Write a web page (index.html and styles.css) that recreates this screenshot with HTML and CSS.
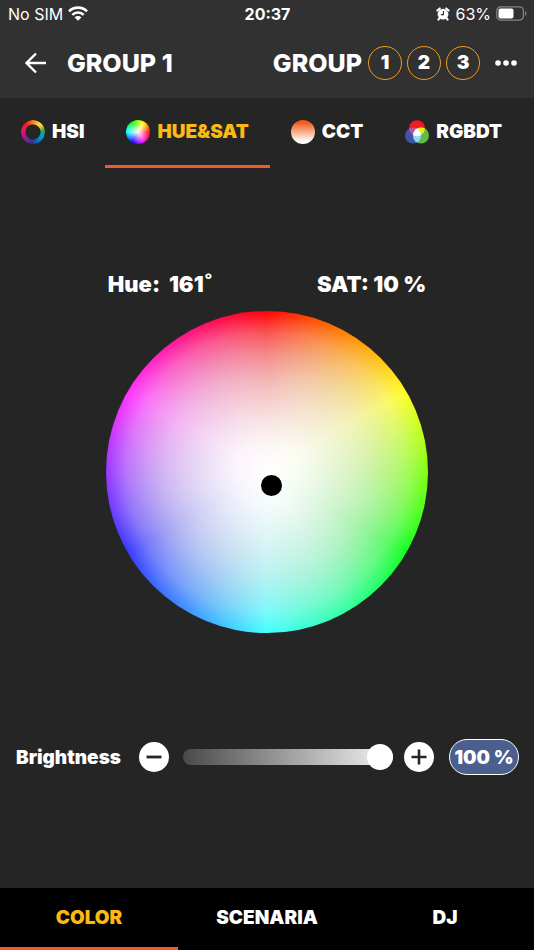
FILE: index.html
```html
<!DOCTYPE html>
<html lang="en">
<head>
<meta charset="utf-8">
<meta name="viewport" content="width=device-width, initial-scale=1">
<title>Group 1</title>
<link rel="stylesheet" href="styles.css">
</head>
<body>
<div class="app">
  <header class="top">
    <div class="status">
      <div class="status-left">
        <span>No SIM</span>
        <svg width="20" height="15" viewBox="0 0 20 15" aria-hidden="true">
          <g fill="none" stroke="#fff" stroke-width="2.6">
            <path d="M1 5.3a12.8 12.8 0 0 1 18 0"/>
            <path d="M4.3 8.8a8.1 8.1 0 0 1 11.4 0"/>
          </g>
          <path d="M10 14.8 6.6 11.4a4.8 4.8 0 0 1 6.8 0z" fill="#fff"/>
        </svg>
      </div>
      <time class="clock">20:37</time>
      <div class="status-right">
        <svg width="14" height="14" viewBox="0 0 14 14" aria-hidden="true">
          <circle cx="7" cy="7.2" r="5.4" fill="#fff"/>
          <path d="M1.4 3.6 3.8 1.4M12.6 3.6 10.2 1.4M3.4 11.2 2.4 12.6M10.6 11.2 11.6 12.6" stroke="#fff" stroke-width="2" stroke-linecap="round"/>
          <path d="M7.4 4v3.6H4.8" fill="none" stroke="#313131" stroke-width="1.1"/>
        </svg>
        <span>63%</span>
        <svg width="31" height="15" viewBox="0 0 31 15" aria-hidden="true">
          <rect x=".8" y=".8" width="26.6" height="13.4" rx="4" fill="none" stroke="#858585" stroke-width="1.2"/>
          <rect x="2.5" y="2.5" width="15" height="10" rx="2" fill="#fff"/>
          <path d="M29 5v5c1.8-.8 1.8-4.2 0-5z" fill="#858585"/>
        </svg>
      </div>
    </div>
    <div class="bar">
      <button class="icon-button" aria-label="Back">
        <svg width="22" height="22" viewBox="0 0 22 22" aria-hidden="true">
          <path d="M21 11H2M11 1.5 1.5 11l9.5 9.5" fill="none" stroke="#fff" stroke-width="2.4"/>
        </svg>
      </button>
      <h1 class="title">GROUP 1</h1>
      <span class="title group-label">GROUP</span>
      <div class="groups">
        <button class="group">1</button>
        <button class="group">2</button>
        <button class="group">3</button>
      </div>
      <button class="icon-button" aria-label="More">
        <svg width="22" height="6" viewBox="0 0 22 6" aria-hidden="true">
          <g fill="#fff"><circle cx="3" cy="3" r="2.8"/><circle cx="11" cy="3" r="2.8"/><circle cx="19" cy="3" r="2.8"/></g>
        </svg>
      </button>
    </div>
  </header>

  <nav class="tabs" aria-label="Color mode">
    <button class="tab"><span class="swatch ring"></span>HSI</button>
    <button class="tab tab-active"><span class="swatch hues"></span>HUE&amp;SAT</button>
    <button class="tab"><span class="swatch warm"></span>CCT</button>
    <button class="tab">
      <svg width="24" height="24" viewBox="0 0 24 24" aria-hidden="true">
        <defs>
          <clipPath id="red"><circle cx="12" cy="8.2" r="8"/></clipPath>
          <clipPath id="blue"><circle cx="8" cy="15.5" r="8"/></clipPath>
        </defs>
        <circle cx="12" cy="8.2" r="8" fill="#ed1c24"/>
        <circle cx="8" cy="15.5" r="8" fill="#3d55a5"/>
        <circle cx="16" cy="15.5" r="8" fill="#62bb46"/>
        <g clip-path="url(#red)">
          <circle cx="8" cy="15.5" r="8" fill="#b9529f"/>
          <circle cx="16" cy="15.5" r="8" fill="#f6eb16"/>
        </g>
        <g clip-path="url(#blue)">
          <circle cx="16" cy="15.5" r="8" fill="#8ed8f8"/>
          <g clip-path="url(#red)"><circle cx="16" cy="15.5" r="8" fill="#fff"/></g>
        </g>
      </svg>
      RGBDT
    </button>
  </nav>

  <main class="main">
    <section class="picker">
      <div class="readout">
        <span class="hue">Hue:&nbsp; 161˚</span>
        <span>SAT: 10 %</span>
      </div>
      <div class="wheel"><span class="marker"></span></div>
    </section>
    <section class="brightness">
      <label class="brightness-label" for="brightness">Brightness</label>
      <button class="step" aria-label="Decrease brightness">
        <svg width="16" height="16" viewBox="0 0 16 16" aria-hidden="true"><path d="M.5 8h15" stroke="#252525" stroke-width="2.8"/></svg>
      </button>
      <input class="slider" id="brightness" type="range" min="0" max="100" value="100">
      <button class="step" aria-label="Increase brightness">
        <svg width="16" height="16" viewBox="0 0 16 16" aria-hidden="true"><path d="M.5 8h15M8 .5v15" stroke="#252525" stroke-width="2.6"/></svg>
      </button>
      <button class="percent">100 %</button>
    </section>
  </main>

  <nav class="bottom" aria-label="Sections">
    <button class="section section-active">COLOR</button>
    <button class="section">SCENARIA</button>
    <button class="section">DJ</button>
  </nav>
</div>
</body>
</html>
```

FILE: styles.css
```css
* {
  box-sizing: border-box;
}

body {
  margin: 0;
  background: #252525;
  color: #fff;
  font-family: Inter, "Liberation Sans", sans-serif;
}

button {
  margin: 0;
  padding: 0;
  border: 0;
  background: none;
  color: inherit;
  font: inherit;
  white-space: nowrap;
}

svg {
  display: block;
  flex: none;
}

.app {
  display: flex;
  flex-direction: column;
  min-height: 100vh;
}

.top {
  background: #313131;
}

.status {
  display: grid;
  grid-template-columns: 1fr auto 1fr;
  align-items: center;
  height: 27px;
  padding: 0 7px 0 8px;
  font-size: 16px;
}

.status-left,
.status-right {
  display: flex;
  align-items: center;
  gap: 5px;
}

.status-right {
  justify-content: flex-end;
}

.clock {
  font-weight: 700;
}

.bar {
  display: flex;
  align-items: center;
  height: 71px;
  padding: 0 17px 0 25px;
}

.icon-button {
  display: grid;
  place-items: center;
}

.title {
  margin: 0 0 0 20px;
  font-size: 25px;
  font-weight: 800;
  white-space: nowrap;
}

.group-label {
  margin-left: auto;
}

.groups {
  display: flex;
  gap: 5px;
  margin: 0 15px 0 6px;
}

.group {
  width: 34px;
  height: 34px;
  border: 1px solid #f39a1a;
  border-radius: 50%;
  font-size: 19px;
  font-weight: 900;
}

.tabs {
  display: flex;
  height: 70px;
}

.tab {
  display: flex;
  align-items: center;
  gap: 7px;
  padding: 0 21px;
  border-bottom: 3px solid transparent;
  font-size: 19px;
  font-weight: 900;
}

.tab-active {
  border-color: #f05a30;
  color: #fdb913;
}

.swatch {
  width: 24px;
  height: 24px;
  border-radius: 50%;
}

.ring {
  background: conic-gradient(#f58220, #ffd23c 35deg, #f5d327 50deg, #35a047 85deg, #009bd8 120deg, #0072bc 155deg, #2b3990 180deg, #662d91 215deg, #c1108c 250deg, #ee145b 285deg, #ed1c24 320deg, #f58220);
  mask: radial-gradient(circle, transparent 7px, #000 8px);
}

.hues {
  background: radial-gradient(closest-side, #fff, transparent), conic-gradient(#8f0, #ff0 30deg, #f00 90deg, #f0f 150deg, #00f 210deg, #0ff 270deg, #0f0 330deg, #8f0);
}

.warm {
  background: linear-gradient(#f15a22 10%, #f7a67e 45%, #fff 90%);
}

.main {
  display: flex;
  flex: 1;
  flex-direction: column;
}

.picker {
  width: calc(60% + 2px);
  margin: 103px auto 0;
}

.readout {
  display: flex;
  justify-content: space-between;
  padding: 0 2px;
  font-size: 22px;
  font-weight: 900;
  line-height: 26px;
  white-space: nowrap;
}

.wheel {
  position: relative;
  aspect-ratio: 1;
  margin-top: 14px;
  border-radius: 50%;
  background:
    radial-gradient(closest-side, #fff 0%, rgb(252 252 252 / 96%) 20%, rgb(246 246 246 / 90%) 35%, rgb(241 241 241 / 81%) 50%, rgb(238 238 238 / 70%) 63%, rgb(236 236 236 / 55%) 75%, rgb(240 240 240 / 34%) 87%, rgb(255 255 255 / 0%) 100%),
    conic-gradient(#f00, #ff8500 30deg, #ffff20 60deg, #80ff10 90deg, #10ff20 120deg, #30ffa0 150deg, #40ffff 180deg, #3a90ff 210deg, #3838ff 240deg, #9838ff 270deg, #ff30ff 300deg, #ff1080 330deg, #f00);
}

.marker {
  position: absolute;
  top: 51%;
  left: 48%;
  width: 21px;
  height: 21px;
  border-radius: 50%;
  background: #000;
}

.brightness {
  display: flex;
  align-items: center;
  margin-top: 106px;
  padding: 0 15px 0 16px;
}

.brightness-label {
  font-size: 19px;
  font-weight: 900;
}

.step {
  display: grid;
  flex: none;
  place-items: center;
  width: 30px;
  height: 30px;
  border-radius: 50%;
  background: #fff;
}

.brightness-label + .step {
  margin-left: 18px;
}

.slider {
  flex: 1;
  min-width: 0;
  height: 26px;
  margin: 0 11px 0 14px;
  appearance: none;
  background: none;
}

.slider::-webkit-slider-runnable-track {
  height: 16px;
  border-radius: 8px;
  background: linear-gradient(90deg, #494949, #f5f5f5);
}

.slider::-webkit-slider-thumb {
  width: 26px;
  height: 26px;
  margin-top: -5px;
  appearance: none;
  border-radius: 50%;
  background: #fff;
}

.percent {
  flex: none;
  width: 70px;
  height: 36px;
  margin-left: 15px;
  border: 1px solid #fff;
  border-radius: 18px;
  background: #4a5f8d;
  font-size: 19px;
  font-weight: 900;
}

.bottom {
  display: grid;
  grid-template-columns: repeat(3, 1fr);
  height: 62px;
  background: #000;
}

.section {
  border-bottom: 3px solid transparent;
  font-size: 19px;
  font-weight: 900;
}

.section-active {
  border-color: #f05a30;
  color: #fdb913;
}
```
